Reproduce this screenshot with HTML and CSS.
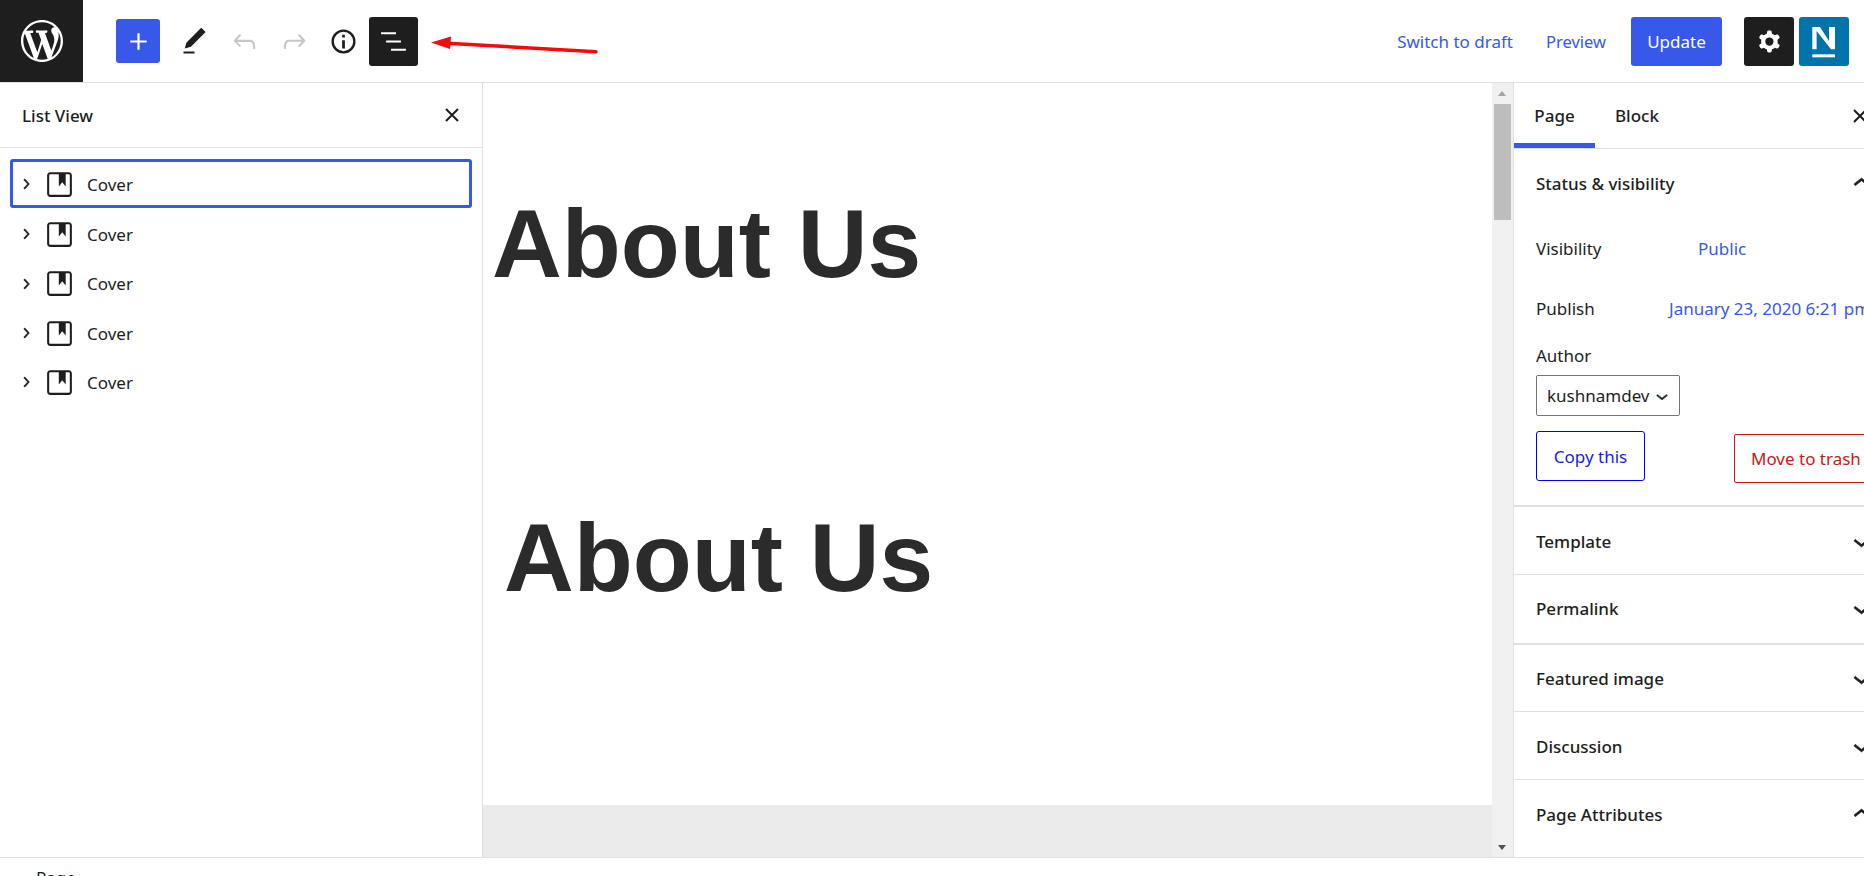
FILE: index.html
```html
<!DOCTYPE html>
<html lang="en">
<head>
<meta charset="utf-8">
<title>Edit Page</title>
<link rel="stylesheet" href="styles.css">
</head>
<body>
<div class="editor">
  <header class="topbar">
    <a class="wp-logo"><svg viewBox="0 0 20 20" width="42" height="42"><path fill="#fff" d="M20 10c0-5.51-4.49-10-10-10C4.48 0 0 4.49 0 10c0 5.52 4.48 10 10 10 5.51 0 10-4.48 10-10zM7.78 15.37L4.37 6.22c.55-.02 1.17-.08 1.17-.08.5-.06.44-1.13-.06-1.11 0 0-1.45.11-2.37.11-.18 0-.37 0-.58-.01C4.12 2.69 6.87 1.11 10 1.11c2.33 0 4.45.87 6.05 2.34-.68-.11-1.65.39-1.65 1.58 0 .74.45 1.36.9 2.1.35.61.55 1.36.55 2.46 0 1.49-1.4 5-1.4 5l-3.03-8.37c.54-.02.82-.17.82-.17.5-.05.44-1.25-.06-1.22 0 0-1.44.12-2.38.12-.87 0-2.33-.12-2.33-.12-.5-.03-.56 1.2-.06 1.22l.92.08 1.26 3.41zM17.41 10c.24-.64.74-1.87.43-4.25.7 1.29 1.05 2.71 1.05 4.25 0 3.29-1.73 6.24-4.4 7.78.97-2.59 1.94-5.2 2.92-7.78zM6.1 18.09C3.12 16.65 1.11 13.53 1.11 10c0-1.3.23-2.48.72-3.59C3.25 10.3 4.67 14.2 6.1 18.09zm4.03-6.63l2.58 6.98c-.86.29-1.76.45-2.71.45-.79 0-1.57-.11-2.29-.33.81-2.38 1.62-4.74 2.42-7.1z"/></svg></a>
    <div class="tools">
      <button class="tool add"><svg viewBox="0 0 24 24" width="33" height="33"><path fill="#fff" d="M18 11.2h-5.2V6h-1.6v5.2H6v1.6h5.2V18h1.6v-5.2H18z"/></svg></button>
      <button class="tool edit"><svg viewBox="0 0 24 24" width="33" height="33"><path fill="#1e1e1e" d="M20.1 5.1L16.9 2 6.2 12.7l-1.3 4.4 4.5-1.3L20.1 5.1zM4 20.8h8v-1.5H4v1.5z"/></svg></button>
      <button class="tool undo"><svg viewBox="0 0 24 24" width="33" height="33"><path fill="#c6c6c6" d="M18.3 11.7c-.6-.6-1.4-.9-2.3-.9H6.7l2.9-3.3-1.1-1-4.5 5L8.5 16l1-1-2.7-2.7H16c.5 0 .9.2 1.3.5 1 1 1 3.4 1 4.5v.3h1.5v-.2c0-1.5 0-4.3-1.5-5.7z"/></svg></button>
      <button class="tool redo"><svg viewBox="0 0 24 24" width="33" height="33"><path fill="#c6c6c6" d="M15.6 6.5l-1.1 1 2.9 3.3H8c-.9 0-1.7.3-2.3.9-1.4 1.5-1.4 4.2-1.4 5.6v.2h1.5v-.3c0-1.1 0-3.5 1-4.5.3-.3.7-.5 1.3-.5h9.2L14.5 15l1.1 1.1 4.6-4.6-4.6-5z"/></svg></button>
      <button class="tool info"><svg viewBox="0 0 24 24" width="33" height="33"><circle cx="12" cy="12" r="7.9" fill="none" stroke="#1e1e1e" stroke-width="1.7"/><path fill="#1e1e1e" d="M11 17h2v-6h-2v6zm0-8h2V7h-2v2z"/></svg></button>
      <button class="tool listview"><svg viewBox="0 0 24 24" width="33" height="33"><path fill="#fff" d="M13.8 5.2H3v1.5h10.8V5.2zm-3.6 12v1.5H21v-1.5H10.2zm7.2-6H6.6v1.5h10.8v-1.5z"/></svg></button>
    </div>
    <div class="actions">
      <a class="link draft">Switch to draft</a>
      <a class="link preview">Preview</a>
      <button class="update">Update</button>
      <button class="square gear"><svg viewBox="0 0 24 24" width="33" height="33"><path fill="#fff" fill-rule="evenodd" d="M10.289 4.836A1 1 0 0111.275 4h1.306a1 1 0 01.987.836l.244 1.466c.787.26 1.503.679 2.108 1.218l1.393-.522a1 1 0 011.216.437l.653 1.13a1 1 0 01-.23 1.273l-1.148.944a6.025 6.025 0 010 2.435l1.149.946a1 1 0 01.23 1.272l-.653 1.13a1 1 0 01-1.216.437l-1.394-.522c-.605.54-1.32.958-2.108 1.218l-.244 1.466a1 1 0 01-.987.836h-1.306a1 1 0 01-.986-.836l-.244-1.466a5.995 5.995 0 01-2.108-1.218l-1.394.522a1 1 0 01-1.217-.436l-.653-1.131a1 1 0 01.23-1.272l1.149-.946a6.026 6.026 0 010-2.435l-1.148-.944a1 1 0 01-.23-1.272l.653-1.131a1 1 0 011.217-.437l1.393.522a5.994 5.994 0 012.108-1.218l.244-1.466zM14.929 12a3 3 0 11-6 0 3 3 0 016 0z"/></svg></button>
      <button class="square nlogo"><svg viewBox="0 0 50 49" width="50" height="49"><path fill="#fff" d="M13.3 10H21l9 14V10h6v22.3h-4L17.6 14v18.3h-4.3z"/><rect fill="#fff" x="13.3" y="37.3" width="22.7" height="3"/></svg></button>
    </div>
  </header>

  <div class="main">
    <aside class="listpanel">
      <div class="listhead">
        <span class="listtitle">List View</span>
        <svg class="closeicon" viewBox="0 0 24 24" width="24" height="24"><path fill="none" stroke="#1e1e1e" stroke-width="2" d="M6 6l12 12M18 6L6 18"/></svg>
      </div>
      <ul class="tree">
        <li class="row selected"><svg class="chev" viewBox="0 0 24 24" width="20" height="20"><path fill="#1e1e1e" d="M10.6 6L9.4 7l4.6 5-4.6 5 1.2 1 5.4-6z"/></svg><svg class="blockicon" viewBox="0 0 24 24" width="33" height="33"><path fill="#1e1e1e" d="M18.7 3H5.3C4 3 3 4 3 5.3v13.4C3 20 4 21 5.3 21h13.4c1.3 0 2.3-1 2.3-2.3V5.3C21 4 20 3 18.7 3zm.8 15.7c0 .4-.4.8-.8.8H5.3c-.4 0-.8-.4-.8-.8V5.3c0-.4.4-.8.8-.8h6.2v8.9l2.5-3.1 2.5 3.1V4.5h2.2c.4 0 .8.4.8.8v13.4z"/></svg><span>Cover</span></li>
        <li class="row"><svg class="chev" viewBox="0 0 24 24" width="20" height="20"><path fill="#1e1e1e" d="M10.6 6L9.4 7l4.6 5-4.6 5 1.2 1 5.4-6z"/></svg><svg class="blockicon" viewBox="0 0 24 24" width="33" height="33"><path fill="#1e1e1e" d="M18.7 3H5.3C4 3 3 4 3 5.3v13.4C3 20 4 21 5.3 21h13.4c1.3 0 2.3-1 2.3-2.3V5.3C21 4 20 3 18.7 3zm.8 15.7c0 .4-.4.8-.8.8H5.3c-.4 0-.8-.4-.8-.8V5.3c0-.4.4-.8.8-.8h6.2v8.9l2.5-3.1 2.5 3.1V4.5h2.2c.4 0 .8.4.8.8v13.4z"/></svg><span>Cover</span></li>
        <li class="row"><svg class="chev" viewBox="0 0 24 24" width="20" height="20"><path fill="#1e1e1e" d="M10.6 6L9.4 7l4.6 5-4.6 5 1.2 1 5.4-6z"/></svg><svg class="blockicon" viewBox="0 0 24 24" width="33" height="33"><path fill="#1e1e1e" d="M18.7 3H5.3C4 3 3 4 3 5.3v13.4C3 20 4 21 5.3 21h13.4c1.3 0 2.3-1 2.3-2.3V5.3C21 4 20 3 18.7 3zm.8 15.7c0 .4-.4.8-.8.8H5.3c-.4 0-.8-.4-.8-.8V5.3c0-.4.4-.8.8-.8h6.2v8.9l2.5-3.1 2.5 3.1V4.5h2.2c.4 0 .8.4.8.8v13.4z"/></svg><span>Cover</span></li>
        <li class="row"><svg class="chev" viewBox="0 0 24 24" width="20" height="20"><path fill="#1e1e1e" d="M10.6 6L9.4 7l4.6 5-4.6 5 1.2 1 5.4-6z"/></svg><svg class="blockicon" viewBox="0 0 24 24" width="33" height="33"><path fill="#1e1e1e" d="M18.7 3H5.3C4 3 3 4 3 5.3v13.4C3 20 4 21 5.3 21h13.4c1.3 0 2.3-1 2.3-2.3V5.3C21 4 20 3 18.7 3zm.8 15.7c0 .4-.4.8-.8.8H5.3c-.4 0-.8-.4-.8-.8V5.3c0-.4.4-.8.8-.8h6.2v8.9l2.5-3.1 2.5 3.1V4.5h2.2c.4 0 .8.4.8.8v13.4z"/></svg><span>Cover</span></li>
        <li class="row"><svg class="chev" viewBox="0 0 24 24" width="20" height="20"><path fill="#1e1e1e" d="M10.6 6L9.4 7l4.6 5-4.6 5 1.2 1 5.4-6z"/></svg><svg class="blockicon" viewBox="0 0 24 24" width="33" height="33"><path fill="#1e1e1e" d="M18.7 3H5.3C4 3 3 4 3 5.3v13.4C3 20 4 21 5.3 21h13.4c1.3 0 2.3-1 2.3-2.3V5.3C21 4 20 3 18.7 3zm.8 15.7c0 .4-.4.8-.8.8H5.3c-.4 0-.8-.4-.8-.8V5.3c0-.4.4-.8.8-.8h6.2v8.9l2.5-3.1 2.5 3.1V4.5h2.2c.4 0 .8.4.8.8v13.4z"/></svg><span>Cover</span></li>
      </ul>
    </aside>

    <main class="canvas">
      <div class="canvas-page">
        <h1 class="title one">About Us</h1>
        <h1 class="title two">About Us</h1>
      </div>
      <div class="canvas-rest"></div>
    </main>

    <div class="scrollbar">
      <span class="arrow up"></span>
      <span class="thumb"></span>
      <span class="arrow down"></span>
    </div>

    <aside class="sidebar">
      <div class="tabs">
        <span class="tab active">Page</span>
        <span class="tab">Block</span>
        <svg class="tabclose" viewBox="0 0 24 24" width="24" height="24"><path fill="none" stroke="#1e1e1e" stroke-width="2" d="M6 6l12 12M18 6L6 18"/></svg>
      </div>
      <section class="panel status">
        <div class="panel-head open"><span>Status &amp; visibility</span><svg viewBox="0 0 24 24" width="33" height="33"><path fill="#1e1e1e" d="M6.5 12.4L12 8l5.5 4.4-.9 1.2L12 10l-4.5 3.6-1-1.2z"/></svg></div>
        <div class="field vis"><span class="label-vis">Visibility</span><a class="val">Public</a></div>
        <div class="field pub"><span class="label-pub">Publish</span><a class="val">January 23, 2020 6:21 pm</a></div>
        <div class="author">Author</div>
        <div class="select"><span>kushnamdev</span><svg viewBox="0 0 24 24" width="24" height="24"><path fill="#1e1e1e" d="M17.5 11.6L12 16l-5.5-4.4.9-1.2L12 14l4.5-3.6 1 1.2z"/></svg></div>
        <div class="btnrow">
          <a class="copy">Copy this</a>
          <a class="trash">Move to trash</a>
        </div>
      </section>
      <section class="panel closed h-template"><span>Template</span><svg viewBox="0 0 24 24" width="33" height="33"><path fill="#1e1e1e" d="M17.5 11.6L12 16l-5.5-4.4.9-1.2L12 14l4.5-3.6 1 1.2z"/></svg></section>
      <section class="panel closed h-permalink"><span>Permalink</span><svg viewBox="0 0 24 24" width="33" height="33"><path fill="#1e1e1e" d="M17.5 11.6L12 16l-5.5-4.4.9-1.2L12 14l4.5-3.6 1 1.2z"/></svg></section>
      <section class="panel closed h-featured"><span>Featured image</span><svg viewBox="0 0 24 24" width="33" height="33"><path fill="#1e1e1e" d="M17.5 11.6L12 16l-5.5-4.4.9-1.2L12 14l4.5-3.6 1 1.2z"/></svg></section>
      <section class="panel closed h-discussion"><span>Discussion</span><svg viewBox="0 0 24 24" width="33" height="33"><path fill="#1e1e1e" d="M17.5 11.6L12 16l-5.5-4.4.9-1.2L12 14l4.5-3.6 1 1.2z"/></svg></section>
      <section class="panel closed h-attrs"><span>Page Attributes</span><svg viewBox="0 0 24 24" width="33" height="33"><path fill="#1e1e1e" d="M6.5 12.4L12 8l5.5 4.4-.9 1.2L12 10l-4.5 3.6-1-1.2z"/></svg></section>
    </aside>
  </div>

  <footer class="crumbs">Page</footer>

  <svg class="annot" viewBox="0 0 200 30" width="200" height="30"><path d="M18 10.2L167 18.7" stroke="#f40a0a" stroke-width="3.4" stroke-linecap="round" fill="none"/><path d="M2 9.5L22 3.5L21 16Z" fill="#f40a0a"/></svg>
</div>
</body>
</html>
```

FILE: styles.css
```css
* { box-sizing: border-box; }
html, body { margin: 0; padding: 0; height: 100%; overflow: hidden; background: #fff; }
body { font-family: "Noto Sans", "Open Sans", sans-serif; color: #1e1e1e; }
button { border: 0; padding: 0; margin: 0; background: none; font: inherit; }
ul { list-style: none; margin: 0; padding: 0; }
svg { display: block; flex: none; }

.editor { position: relative; width: 1864px; height: 876px; overflow: hidden; display: flex; flex-direction: column; }

.topbar { flex: none; height: 83px; display: flex; align-items: center; border-bottom: 1px solid #e0e0e0; }
.wp-logo { width: 83px; height: 82px; background: #1e1e1e; display: flex; align-items: center; justify-content: center; }
.tools { display: flex; align-items: center; margin-left: 33px; }
.tool { display: flex; align-items: center; justify-content: center; height: 49px; border-radius: 3px; }
.add { width: 44px; height: 44px; background: #3858e9; }
.edit { width: 49px; margin-left: 10px; }
.undo { width: 50px; }
.redo { width: 50px; }
.info { width: 48px; }
.listview { width: 49px; background: #1e1e1e; margin-left: 2px; }

.actions { margin-left: auto; display: flex; align-items: center; padding-right: 15px; }
.link { font-size: 17px; color: #3858e9; }
.draft { margin-right: 33px; }
.preview { margin-right: 25px; font-size: 16.5px; }
.update { width: 91px; height: 49px; background: #3858e9; color: #fff; font-size: 17px; border-radius: 3px; }
.square { width: 50px; height: 49px; border-radius: 3px; display: flex; align-items: center; justify-content: center; }
.gear { background: #1e1e1e; margin-left: 22px; }
.nlogo { background: #0073aa; margin-left: 5px; }

.main { flex: none; height: 775px; display: flex; border-bottom: 1px solid #e0e0e0; }

.listpanel { flex: none; width: 483px; border-right: 1px solid #e0e0e0; }
.listhead { height: 65px; border-bottom: 1px solid #e0e0e0; display: flex; align-items: center; justify-content: space-between; padding: 0 18px 0 22px; }
.listtitle { font-size: 17px; font-weight: 500; }
.tree { padding: 11px 10px 0; display: flex; flex-direction: column; }
.row { height: 49.3px; display: flex; align-items: center; font-size: 17px; border: 3px solid transparent; border-radius: 3px; padding-left: 1px; padding-top: 1px; }
.selected { border-color: #3858e9; margin-bottom: 1px; }
.chev { margin: 0 2px; }
.chev path { stroke: #1e1e1e; stroke-width: .9; }
.blockicon { margin-left: 5px; }
.row span { margin-left: 11px; }

.canvas { flex: none; width: 1009px; display: flex; flex-direction: column; }
.canvas-page { flex: none; height: 722px; }
.canvas-rest { flex: 1; background: #ebebeb; }
.title { margin: 0; font-family: "Liberation Sans", Arial, sans-serif; font-weight: 700; font-size: 96.6px; line-height: 110px; color: #2b2b2b; white-space: nowrap; }
.one { margin: 106px 0 0 9px; }
.two { margin: 204px 0 0 21px; }

.scrollbar { flex: none; width: 22px; background: #f0f0f0; border-right: 1px solid #e0e0e0; position: relative; }
.thumb { position: absolute; top: 21px; left: 2px; width: 17px; height: 116px; background: #bdbdbd; }
.arrow { position: absolute; left: 6px; width: 0; height: 0; border-left: 4.5px solid transparent; border-right: 4.5px solid transparent; }
.arrow.up { top: 8px; border-bottom: 5px solid #a3a3a3; }
.arrow.down { bottom: 7px; border-top: 5px solid #505050; }

.sidebar { flex: none; width: 350px; overflow: hidden; }
.tabs { height: 66px; display: flex; align-items: stretch; border-bottom: 1px solid #e0e0e0; position: relative; font-size: 17px; font-weight: 500; }
.tab { display: flex; align-items: center; justify-content: center; }
.tab.active { width: 81px; box-shadow: inset 0 -5px 0 #3858e9; }
.tab + .tab { margin-left: 20px; }
.tabclose { position: absolute; left: 334px; top: 21px; }

.panel { border-bottom: 1px solid #e0e0e0; }
.panel-head, .closed { display: flex; align-items: center; justify-content: space-between; padding: 0 0 0 22px; font-size: 17px; font-weight: 500; }
.panel-head svg, .closed svg { margin-right: -14px; }
.panel-head svg path, .closed svg path, .select svg path { stroke: #1e1e1e; stroke-width: .4; }
.panel-head { height: 68px; }
.status { height: 358px; border-bottom-width: 2px; }
.closed { height: 68px; }
.h-template { height: 68px; padding-top: 1px; }
.h-permalink { height: 70px; border-bottom-width: 2px; padding-bottom: 1px; }
.h-featured { height: 67px; }
.h-discussion { height: 68px; padding-top: 1px; }
.h-attrs { height: 79px; border-bottom: 0; padding-bottom: 10px; }

.field { display: flex; align-items: center; font-size: 17px; padding-left: 22px; white-space: nowrap; }
.val { color: #3858e9; flex: none; }
.label-vis { flex: none; width: 162px; }
.label-pub { flex: none; width: 133px; }
.vis { height: 23px; margin-top: 20px; }
.pub { height: 23px; margin-top: 37px; }
.author { font-size: 17px; margin: 24px 0 0 22px; line-height: 23px; }
.select { margin: 8px 0 0 22px; width: 144px; height: 41px; border: 1px solid #757575; border-radius: 2px; display: flex; align-items: center; font-size: 17px; padding-left: 10px; }
.btnrow { display: flex; align-items: flex-start; margin: 15px 0 0 22px; font-size: 17px; }
.copy { flex: none; width: 109px; height: 50px; border: 1px solid #0000f0; border-radius: 3px; color: #1a1ae6; display: flex; align-items: center; justify-content: center; }
.trash { flex: none; width: 140px; height: 49px; margin: 3px 0 0 89px; border: 1px solid #cc1818; border-radius: 2px; color: #cc1818; display: flex; align-items: center; padding-left: 16px; white-space: nowrap; }

.crumbs { padding: 8px 0 0 36px; font-size: 17px; line-height: 23px; }

.annot { position: absolute; left: 429px; top: 33px; }
```
